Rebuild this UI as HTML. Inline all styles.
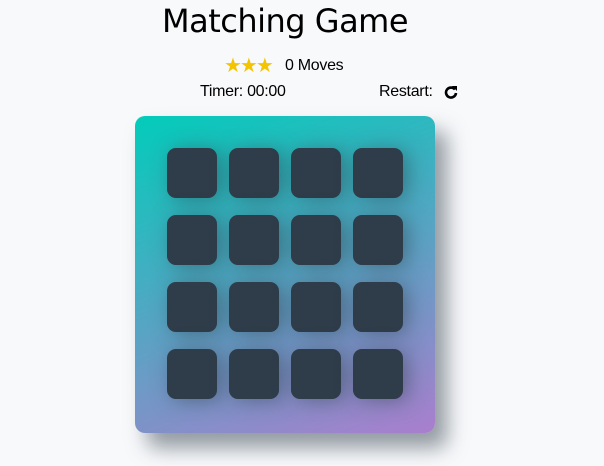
<!DOCTYPE html>
<html><head><style>
body{margin:0;width:604px;height:466px;background:#f8f9fb;font-family:"Liberation Sans",sans-serif;position:relative;overflow:hidden;color:#000}
h1{position:absolute;top:0;left:0;width:570px;margin:0;text-align:center;font-size:32px;line-height:42px;font-family:"DejaVu Sans",sans-serif;font-weight:normal;letter-spacing:-0.5px}
.stars{position:absolute;left:224px;top:53px;color:#f5c400;font-size:20px;letter-spacing:-2px}
.moves{position:absolute;left:285px;top:57px;font-size:16px;letter-spacing:-0.3px}
.timer{position:absolute;left:200px;top:83px;font-size:16px;letter-spacing:-0.3px}
.restart{position:absolute;left:379px;top:83px;font-size:16px;letter-spacing:-0.3px}
.deck{position:absolute;left:135px;top:116px;width:300px;height:317px;border-radius:10px;background:linear-gradient(160deg,#02ccba 0%,#aa7ecd 100%);box-shadow:12px 15px 20px rgba(46,61,73,.5)}
.c{position:absolute;width:50px;height:50px;border-radius:9px;background:#2e3d49;box-shadow:5px 2px 20px rgba(46,61,73,.5)}
</style></head><body>
<h1>Matching Game</h1>
<div class="stars">★★★</div>
<div class="moves">0 Moves</div>
<div class="timer">Timer: 00:00</div>
<div class="restart">Restart:</div>
<svg style="position:absolute;left:444px;top:85px" width="14" height="14" viewBox="0 0 14 14"><path d="M11 4.5A5 5 0 1 0 12 8" fill="none" stroke="#000" stroke-width="2.6"/><path d="M8 1h5v5z" fill="#000"/></svg>
<div class="deck">
<div class="c" style="left:32px;top:32px"></div><div class="c" style="left:94px;top:32px"></div><div class="c" style="left:156px;top:32px"></div><div class="c" style="left:218px;top:32px"></div>
<div class="c" style="left:32px;top:99px"></div><div class="c" style="left:94px;top:99px"></div><div class="c" style="left:156px;top:99px"></div><div class="c" style="left:218px;top:99px"></div>
<div class="c" style="left:32px;top:166px"></div><div class="c" style="left:94px;top:166px"></div><div class="c" style="left:156px;top:166px"></div><div class="c" style="left:218px;top:166px"></div>
<div class="c" style="left:32px;top:233px"></div><div class="c" style="left:94px;top:233px"></div><div class="c" style="left:156px;top:233px"></div><div class="c" style="left:218px;top:233px"></div>
</div>
</body></html>
